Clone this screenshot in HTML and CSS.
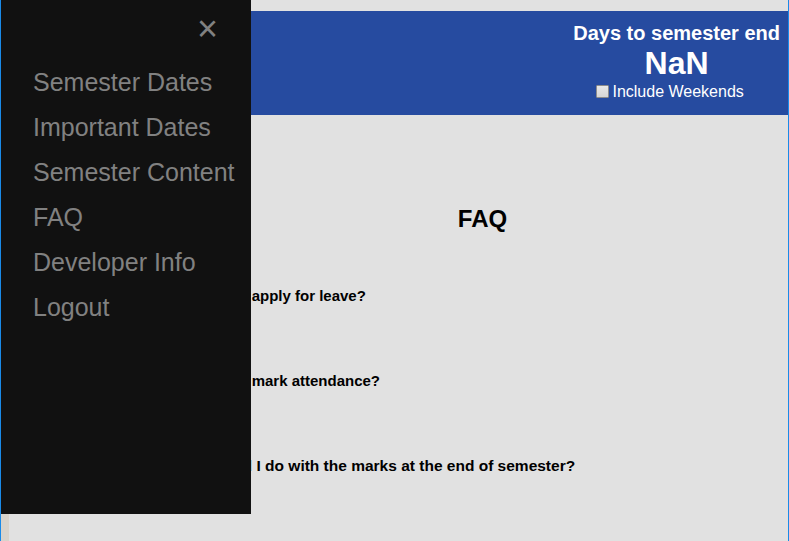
FILE: index.html
```html
<!DOCTYPE html>
<html lang="en">
<head>
<meta charset="utf-8">
<title>FAQ</title>
<link rel="stylesheet" href="styles.css">
</head>
<body>
<div class="page">
  <header class="topbar">
    <div class="counter">
      <div class="counter-title">Days to semester end</div>
      <div class="counter-value">NaN</div>
      <label class="counter-option"><input type="checkbox" class="check">Include Weekends</label>
    </div>
  </header>
  <main class="content">
    <h2 class="faq-title">FAQ</h2>
    <p class="question">How do I apply for leave?</p>
    <p class="question">How do I mark attendance?</p>
    <p class="question question-long">What will I do with the marks at the end of semester?</p>
  </main>
</div>
<nav class="sidenav">
  <a href="#" class="closebtn">&times;</a>
  <a href="#" class="navlink">Semester Dates</a>
  <a href="#" class="navlink">Important Dates</a>
  <a href="#" class="navlink">Semester Content</a>
  <a href="#" class="navlink">FAQ</a>
  <a href="#" class="navlink">Developer Info</a>
  <a href="#" class="navlink">Logout</a>
</nav>
<div class="frame"></div>
</body>
</html>
```
FILE: styles.css
```css
html, body {
  margin: 0;
  padding: 0;
  height: 100%;
}
body {
  background: #d8d3cb;
  font-family: "Liberation Sans", Arial, sans-serif;
  overflow: hidden;
}
.page {
  margin-left: 9px;
  min-height: 100vh;
  background: #e1e1e1;
  padding-top: 11px;
  box-sizing: border-box;
}
.topbar {
  margin-right: 1px;
  height: 104px;
  background: #264ba0;
  display: flex;
  justify-content: flex-end;
  padding: 11px 8px 0 0;
  box-sizing: border-box;
  color: #fff;
}
.counter {
  text-align: center;
}
.counter-title {
  font-size: 20px;
  font-weight: bold;
  line-height: 23px;
}
.counter-value {
  font-size: 32px;
  font-weight: bold;
  line-height: 37px;
}
.counter-option {
  display: block;
  font-size: 16px;
  line-height: 18px;
  padding-right: 17px;
}
.check {
  -webkit-appearance: none;
  appearance: none;
  box-sizing: border-box;
  margin: 3px 3px 0 4px;
  width: 13px;
  height: 13px;
  border: 1px solid #8c8c8c;
  border-radius: 1px;
  background: linear-gradient(#e8e8e8, #d6d6d6);
  vertical-align: -1px;
}
.content {
  padding: 90px 9px 0 176px;
}
.faq-title {
  margin: 0 0 54px;
  font-size: 24px;
  line-height: 28px;
  text-align: center;
  color: #000;
}
.question {
  margin: 0 0 68px;
  font-size: 15px;
  font-weight: bold;
  line-height: 17px;
  color: #000;
}
.question-long {
  font-size: 15.5px;
}
.sidenav {
  position: fixed;
  top: 0;
  left: 1px;
  width: 250px;
  height: 514px;
  background: #111;
  padding-top: 60px;
  box-sizing: border-box;
}
.navlink {
  display: block;
  padding: 8px 8px 8px 32px;
  font-size: 25px;
  color: #818181;
  text-decoration: none;
}
.closebtn {
  position: absolute;
  top: 0;
  right: 25px;
  padding: 8px;
  font-size: 36px;
  color: #818181;
  text-decoration: none;
}
.frame {
  position: fixed;
  inset: 0;
  border-left: 1px solid #1a8ae8;
  border-right: 1px solid #1a8ae8;
  pointer-events: none;
}
```
